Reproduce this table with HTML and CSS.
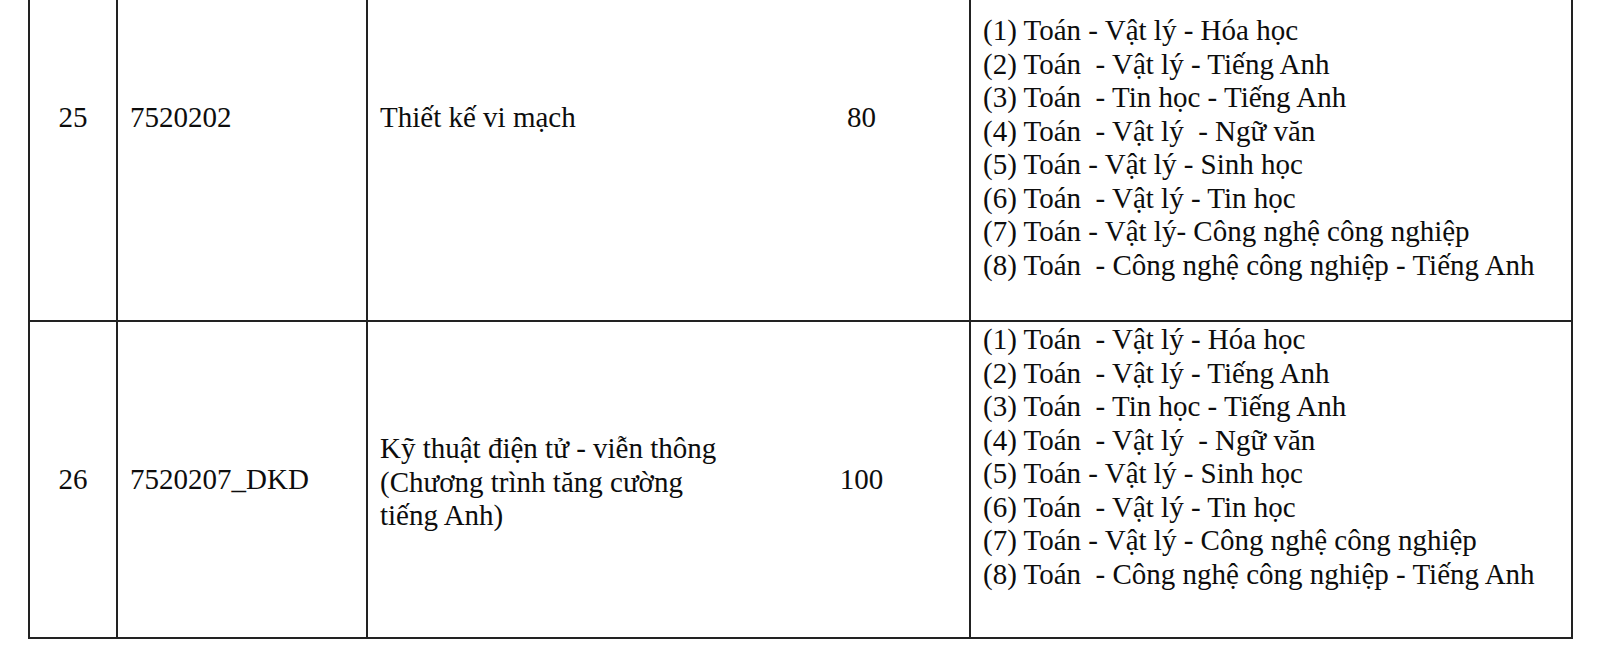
FILE: index.html
```html
<!DOCTYPE html>
<html lang="vi">
<head>
<meta charset="utf-8">
<title>Bảng ngành tuyển sinh</title>
<link rel="stylesheet" href="styles.css">
</head>
<body>
<table class="majors">
  <colgroup>
    <col class="c-stt">
    <col class="c-code">
    <col class="c-name">
    <col class="c-qty">
    <col class="c-combo">
  </colgroup>
  <tbody>
    <tr class="row row--first">
      <td class="stt">25</td>
      <td class="code">7520202</td>
      <td class="name">Thiết kế vi mạch</td>
      <td class="qty">80</td>
      <td class="combo combo--first"><div class="line">(1) Toán - Vật lý - Hóa học</div><div class="line">(2) Toán  - Vật lý - Tiếng Anh</div><div class="line">(3) Toán  - Tin học - Tiếng Anh</div><div class="line">(4) Toán  - Vật lý  - Ngữ văn</div><div class="line">(5) Toán - Vật lý - Sinh học</div><div class="line">(6) Toán  - Vật lý - Tin học</div><div class="line">(7) Toán - Vật lý- Công nghệ công nghiệp</div><div class="line">(8) Toán  - Công nghệ công nghiệp - Tiếng Anh</div></td>
    </tr>
    <tr class="row">
      <td class="stt">26</td>
      <td class="code">7520207_DKD</td>
      <td class="name name--wrap">Kỹ thuật điện tử - viễn thông (Chương trình tăng cường tiếng Anh)</td>
      <td class="qty">100</td>
      <td class="combo combo--second"><div class="line">(1) Toán  - Vật lý - Hóa học</div><div class="line">(2) Toán  - Vật lý - Tiếng Anh</div><div class="line">(3) Toán  - Tin học - Tiếng Anh</div><div class="line">(4) Toán  - Vật lý  - Ngữ văn</div><div class="line">(5) Toán - Vật lý - Sinh học</div><div class="line">(6) Toán  - Vật lý - Tin học</div><div class="line">(7) Toán - Vật lý - Công nghệ công nghiệp</div><div class="line">(8) Toán  - Công nghệ công nghiệp - Tiếng Anh</div></td>
    </tr>
  </tbody>
</table>
</body>
</html>
```

FILE: styles.css
```css
html, body {
  margin: 0;
  padding: 0;
  background: #ffffff;
}

body {
  font-family: "Liberation Serif", "Times New Roman", serif;
  font-size: 29px;
  line-height: 33.5px;
  color: #0d0d0d;
  overflow: hidden;
}

.majors {
  border-collapse: collapse;
  table-layout: fixed;
  width: 1545px;
  margin: -86px 0 0 28px;
}

.c-stt { width: 88px; }
.c-code { width: 250px; }
.c-name { width: 387px; }
.c-qty { width: 216px; }
.c-combo { width: 602px; }

.majors td {
  border: 2px solid #222222;
  padding: 1px 12px;
  vertical-align: middle;
}

.majors td.name {
  border-right-style: hidden;
}

.majors td.name--wrap {
  padding-top: 7px;
}

.majors td.qty {
  border-left-style: hidden;
  text-align: center;
}

.stt {
  text-align: center;
}

.code {
  padding-left: 13px;
}

.majors td.combo--first {
  vertical-align: top;
  padding-top: 98px;
  padding-bottom: 38px;
}

.majors td.combo--second {
  vertical-align: top;
  padding-top: 1px;
  padding-bottom: 46px;
}

.line {
  white-space: pre;
}
```
